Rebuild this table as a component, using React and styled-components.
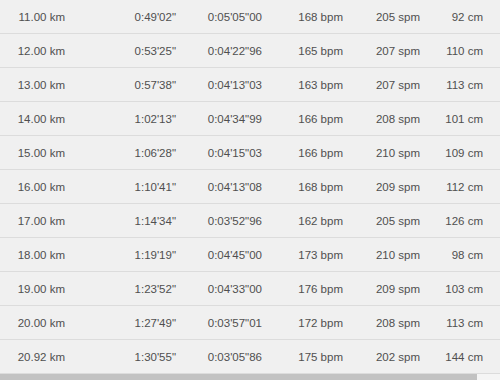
import React from "react";
import styled, { createGlobalStyle } from "styled-components";

const GlobalStyle = createGlobalStyle`
  html, body {
    margin: 0;
    padding: 0;
    background: #f0f0f0;
  }
  body {
    font-family: "Liberation Sans", Arial, sans-serif;
  }
`;

const Page = styled.div`
  width: 500px;
  height: 380px;
  overflow: hidden;
  background: #f0f0f0;
  display: flex;
  flex-direction: column;
`;

const Table = styled.div`
  display: flex;
  flex-direction: column;
`;

const Row = styled.div`
  display: grid;
  grid-template-columns: 65px 111px 86px 81px 77px 63px;
  height: 33px;
  align-items: center;
  border-bottom: 1px solid #dcdcdc;
  color: #4f4f4f;
  font-size: 11.5px;
`;

const Cell = styled.div`
  text-align: right;
  white-space: nowrap;
`;

const ScrollTrack = styled.div`
  height: 6px;
  background: #f5f5f5;
  display: flex;
`;

const ScrollThumb = styled.div`
  width: 477px;
  background: #c2c2c2;
`;

const splits = [
  ["11.00 km", "0:49'02\"", "0:05'05\"00", "168 bpm", "205 spm", "92 cm"],
  ["12.00 km", "0:53'25\"", "0:04'22\"96", "165 bpm", "207 spm", "110 cm"],
  ["13.00 km", "0:57'38\"", "0:04'13\"03", "163 bpm", "207 spm", "113 cm"],
  ["14.00 km", "1:02'13\"", "0:04'34\"99", "166 bpm", "208 spm", "101 cm"],
  ["15.00 km", "1:06'28\"", "0:04'15\"03", "166 bpm", "210 spm", "109 cm"],
  ["16.00 km", "1:10'41\"", "0:04'13\"08", "168 bpm", "209 spm", "112 cm"],
  ["17.00 km", "1:14'34\"", "0:03'52\"96", "162 bpm", "205 spm", "126 cm"],
  ["18.00 km", "1:19'19\"", "0:04'45\"00", "173 bpm", "210 spm", "98 cm"],
  ["19.00 km", "1:23'52\"", "0:04'33\"00", "176 bpm", "209 spm", "103 cm"],
  ["20.00 km", "1:27'49\"", "0:03'57\"01", "172 bpm", "208 spm", "113 cm"],
  ["20.92 km", "1:30'55\"", "0:03'05\"86", "175 bpm", "202 spm", "144 cm"],
];

const App = () => {
  return (
    <Page>
      <GlobalStyle />
      <Table>
        {splits.map((row) => (
          <Row key={row[0]}>
            {row.map((value, i) => (
              <Cell key={i}>{value}</Cell>
            ))}
          </Row>
        ))}
      </Table>
      <ScrollTrack>
        <ScrollThumb />
      </ScrollTrack>
    </Page>
  );
};

export default App;
